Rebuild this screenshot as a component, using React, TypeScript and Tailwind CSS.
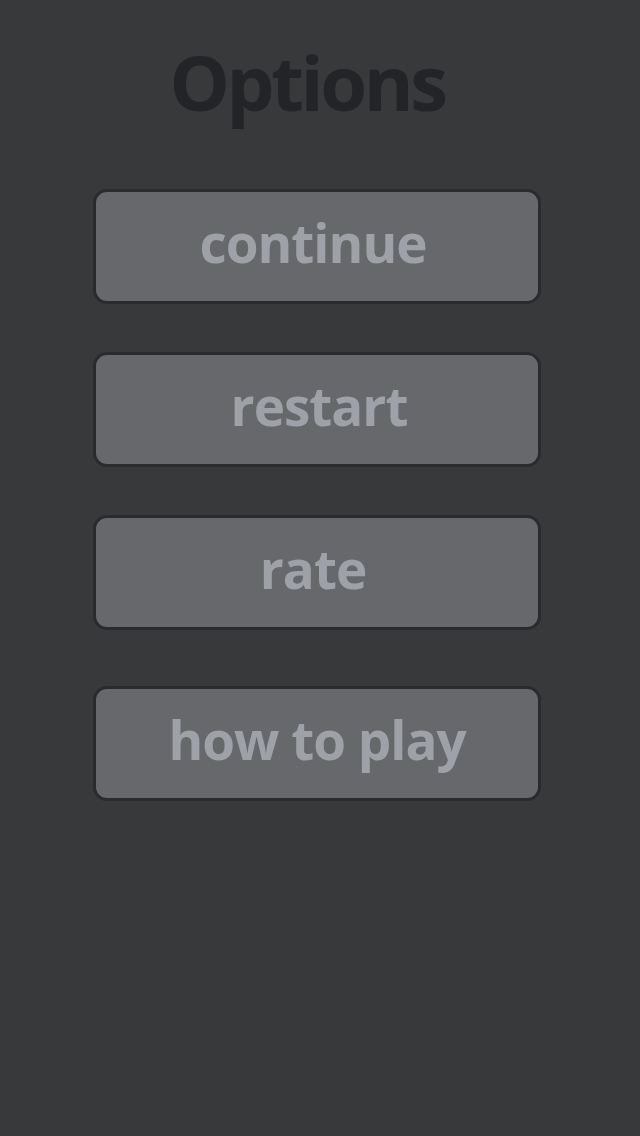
const items = ['continue', 'restart', 'rate', 'how to play']

export default function App() {
  return (
    <div
      className="min-h-[1136px] w-full bg-[#38393b] flex flex-col items-center"
      style={{ fontFamily: '"Open Sans", "DejaVu Sans", sans-serif' }}
    >
      <h1 className="mt-[37px] mr-[26px] text-[76px] leading-[90px] font-bold tracking-[-3.5px] text-[#222427]">
        Options
      </h1>
      <div className="mt-[62px] mr-[6px] flex flex-col gap-[48px]">
        {items.map((label, i) => (
          <button
            key={label}
            className={
              'w-[448px] h-[115px] rounded-[14px] border-[3px] border-[#2a2b2e] bg-[#66686c] text-[#9ea1a7] text-[53px] font-bold tracking-[-1px] flex items-center justify-center pb-[8px]' +
              (i === 3 ? ' mt-[8px]' : '')
            }
          >
            <span className={i === 3 ? '' : i === 1 ? 'ml-[4px]' : 'mr-[8px]'}>{label}</span>
          </button>
        ))}
      </div>
    </div>
  )
}
